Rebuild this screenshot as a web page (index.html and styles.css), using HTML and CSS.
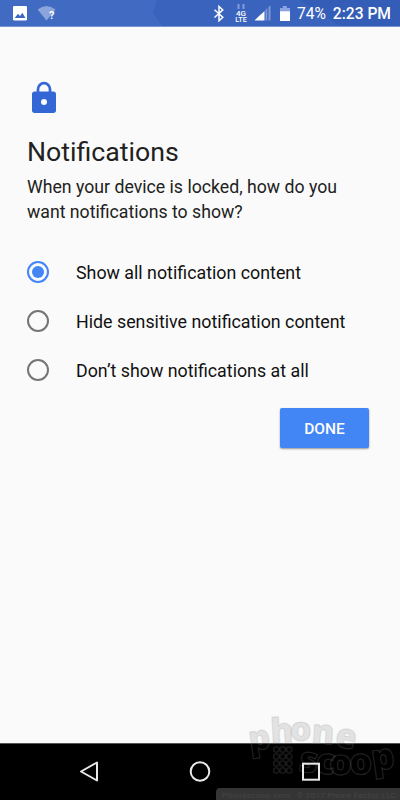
FILE: index.html
```html
<!DOCTYPE html>
<html lang="en">
<head>
<meta charset="utf-8">
<title>Notifications</title>
<link rel="stylesheet" href="styles.css">
</head>
<body>
<div class="phone">
  <header class="status">
    <svg class="status-icons" width="400" height="27" viewBox="0 0 400 27">
      <path fill="#3a63bd" d="M157 0H400V26H162L153 13Z"/>
      <path fill="#3059b2" d="M300 0H400V26H340Z" opacity=".55"/>
      <rect x="13" y="6" width="14" height="14.5" rx="1.3" fill="#fff"/>
      <path fill="#3c68bf" d="M14.7 18 18 13.8l2 2.2 2.4-3.2 3 5.2Z"/>
      <path fill="#8ba4dc" d="M37.5 9.5Q46.500 2.500 55.500 9.500L46.500 20.500Z"/>
      <text class="wifi-mark" x="49" y="19.300">?</text>
      <path d="M214.500 9.800 222.800 17.300 219 20.700V6.500L222.800 9.900 214.500 17.500" fill="none" stroke="#fff" stroke-width="1.500"/>
      <path d="M238.500 4v5M243.500 4v5" stroke="#819be0" stroke-width="2"/>
      <text class="network" x="236" y="15.800" textLength="10" lengthAdjust="spacingAndGlyphs">4G</text>
      <text class="network" x="235.300" y="21.900" textLength="11.500" lengthAdjust="spacingAndGlyphs">LTE</text>
      <path fill="#fff" d="M254.500 20.500 258 17v3.500ZM258 17l3.500-3.300v6.800H258ZM261.500 14l3-3v9.500h-3Z"/>
      <path fill="#7e97d8" d="M265.500 9.800 267.300 8v12.500h-1.800ZM268.500 7 270.500 5.200v15.300h-2Z"/>
      <path fill="#8ca4df" d="M280 8h2.800V6h4v2H290v4H280Z"/>
      <path fill="#fff" d="M280 11.300h10v9.700H280Z"/>
    </svg>
    <span class="battery">74%</span>
    <span class="clock">2:23 PM</span>
  </header>
  <main class="content">
    <svg class="lock" width="26" height="33" viewBox="0 0 26 33">
      <path fill="none" stroke="#3367d6" stroke-width="2.700" d="M7 12V8.200a6 6 0 0 1 12 0V12"/>
      <rect x="1" y="10.500" width="24" height="21.500" rx="2.700" fill="#3367d6"/>
      <circle cx="13" cy="21" r="3" fill="#fafafa"/>
    </svg>
    <h1 class="title">Notifications</h1>
    <p class="intro">When your device is locked, how do you<br>want notifications to show?</p>
    <div class="options">
      <label class="option"><span class="radio selected"></span><span class="name">Show all notification content</span></label>
      <label class="option"><span class="radio"></span><span class="name">Hide sensitive notification content</span></label>
      <label class="option"><span class="radio"></span><span class="name">Don’t show notifications at all</span></label>
    </div>
    <button class="done">DONE</button>
  </main>
  <nav class="navbar">
    <svg width="400" height="57" viewBox="0 0 400 57" fill="none" stroke="#e8e8e8" stroke-width="2">
      <path stroke-linejoin="round" d="M97 19.500V37.500L81 28.500Z"/>
      <circle cx="200" cy="28.500" r="9.300"/>
    </svg>
  </nav>
  <svg class="watermark" width="184" height="100" viewBox="216 700 184 100">
    <defs>
      <pattern id="dots" x="273" y="746" width="6.500" height="7" patternUnits="userSpaceOnUse"><circle cx="3.250" cy="3.500" r="2.700" fill="none" stroke="#222" stroke-width="1"/></pattern>
    </defs>
    <text class="mark" x="250 271 290 311 334" y="751 743 741 743 746" rotate="-8 -3 0 4 10">phone</text>
    <text class="mark scoop" x="298 315 329 350 373" y="771 773 775 775 771" rotate="8 5 0 -4 -8">scoop</text>
    <path fill="url(#dots)" d="M273 746h19.500v28H273Z"/>
    <rect x="303" y="763.700" width="16" height="16" fill="none" stroke="#e8e8e8" stroke-width="2"/>
    <path fill="#353535" d="M216 800V792q0-4 4-4H400V800Z"/>
    <text class="copyright" x="222" y="797.500" textLength="68">Phonescoop.com</text>
    <text class="copyright" x="297" y="797.500" textLength="99">© 2017 Phone Factor, LLC</text>
  </svg>
</div>
</body>
</html>
```
FILE: styles.css
```css
* { box-sizing: border-box; }
body { margin: 0; font-family: Roboto, "Liberation Sans", sans-serif; }
.phone { position: relative; display: flex; flex-direction: column; width: 400px; height: 800px; overflow: hidden; background: #fafafa; }
.status { position: relative; display: flex; align-items: center; justify-content: flex-end; gap: 7px; height: 27px; padding: 2px 9px 0 0; background: #416bc3; border-bottom: 1px solid #7893d2; color: #fff; }
.status-icons { position: absolute; top: 0; left: 0; }
.battery, .clock { position: relative; white-space: nowrap; font-size: 15.6px; line-height: 26px; }
.clock { font-weight: 500; }
.wifi-mark { font-size: 11px; font-weight: 700; fill: #fff; }
.network { font-size: 7px; font-weight: 500; fill: #fff; }
.content { display: flex; flex: 1; flex-direction: column; align-items: flex-start; padding: 54px 31px 0 27px; color: #212121; }
.lock { display: block; margin-left: 4px; }
.title { margin: 19.5px 0 0; font-size: 26.7px; font-weight: 400; line-height: 36px; white-space: nowrap; }
.intro { margin: 5px 0 0; font-size: 17.7px; line-height: 25.5px; white-space: nowrap; }
.options { margin-top: 22px; color: #111; }
.option { display: flex; align-items: center; gap: 27px; height: 49px; }
.radio { display: grid; place-items: center; width: 22px; height: 22px; border: 2px solid #757575; border-radius: 50%; }
.selected { border-color: #4285f4; }
.selected::after { content: ""; width: 12px; height: 12px; border-radius: 50%; background: #4285f4; }
.name { padding-top: 1px; font-size: 17.82px; line-height: 24px; white-space: nowrap; }
.done { align-self: flex-end; width: 89px; height: 40px; margin: 13.5px 0 0; padding: 1px 0 0; border: 0; border-radius: 2px; background: #4285f4; box-shadow: 0 1px 2px #0006; color: #fff; font: 500 15.500px Roboto, sans-serif; }
.navbar { height: 57px; background: #000; border-top: 1px solid #555; }
.navbar svg { display: block; margin-top: -1px; }
.watermark { position: absolute; right: 0; bottom: 0; }
.mark { font: 800 34px "Open Sans", sans-serif; fill: rgba(0, 0, 0, .11); stroke: rgba(150, 150, 150, .22); stroke-width: 1.2px; }
.scoop { font-size: 36px; }
.copyright { font: 8px Roboto, sans-serif; fill: #454545; }
```
